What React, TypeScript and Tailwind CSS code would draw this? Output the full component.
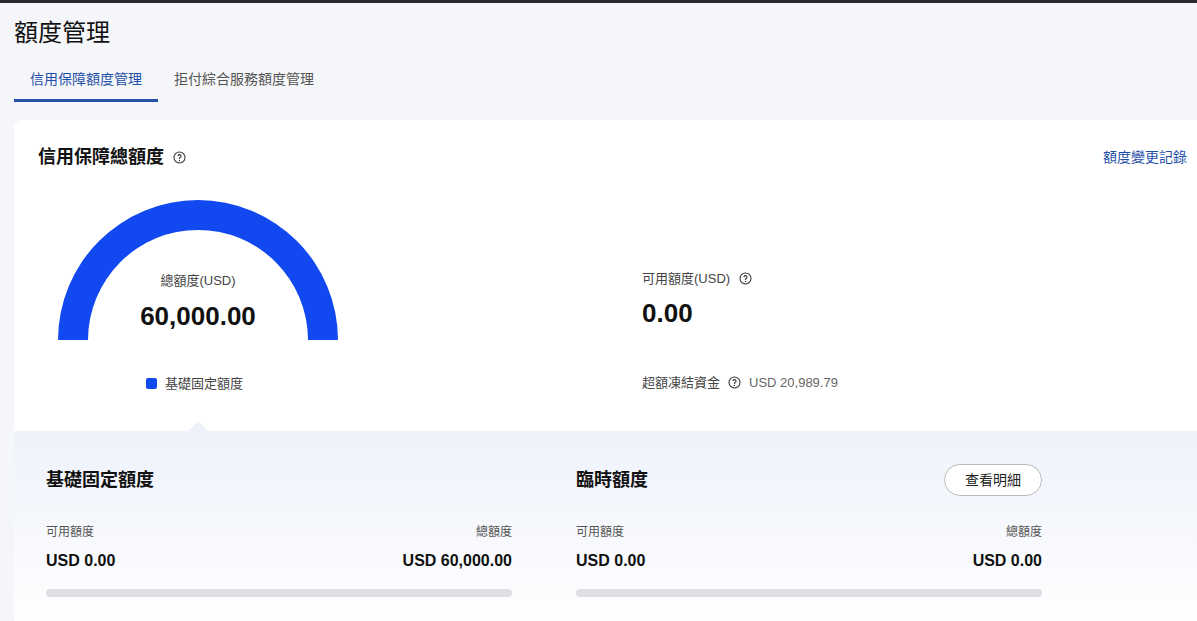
export default function App() {
  const f = { fontFamily: '"Liberation Sans", "Noto Sans CJK TC", sans-serif' };
  const Help = () => (
    <svg width="13" height="13" viewBox="0 0 16 16" className="inline-block">
      <circle cx="8" cy="8" r="6.8" fill="none" stroke="#333" strokeWidth="1.3" />
      <path d="M6.1 6.3a1.9 1.9 0 1 1 2.6 1.8c-.5.2-.7.6-.7 1.1v.5" fill="none" stroke="#333" strokeWidth="1.3" />
      <circle cx="8" cy="11.6" r=".8" fill="#333" />
    </svg>
  );
  const Col = ({ title, total, btn }: { title: string; total: string; btn?: boolean }) => (
    <div className="w-[466px]">
      <div className="flex items-center justify-between h-[34px]">
        <div className="text-[18px] font-bold text-[#111]">{title}</div>
        {btn && <button className="h-[32px] px-5 rounded-full border border-[#bbb] bg-white text-[14px] text-[#222]">查看明細</button>}
      </div>
      <div className="mt-[26px] flex justify-between text-[12px] text-[#555]"><span>可用額度</span><span>總額度</span></div>
      <div className="mt-[8px] flex justify-between text-[16px] font-bold text-[#111]"><span>USD 0.00</span><span>{total}</span></div>
      <div className="mt-[16px] h-[8px] rounded-full bg-[#dedfe2]" />
    </div>
  );
  return (
    <div style={f} className="w-[1197px] h-[621px] bg-[#f5f6f9] overflow-hidden">
      <div className="h-[3px] bg-[#2a2a2a]" />
      <div className="pl-[14px]">
        <div className="pt-[14px] text-[24px] text-[#111] leading-[32px]">額度管理</div>
        <div className="mt-[20px] flex text-[14px] h-[33px]">
          <div className="w-[144px] text-center text-[#1f4fa8] border-b-[3px] border-[#2750a8]">信用保障額度管理</div>
          <div className="ml-[16px] text-[#555]">拒付綜合服務額度管理</div>
        </div>
        <div className="mt-[18px] bg-white rounded-tl-[8px] h-[520px]">
          <div className="flex justify-between items-center pt-[24px] pl-[24px] pr-[10px]">
            <div className="flex items-center gap-[9px] text-[18px] font-bold text-[#111]">信用保障總額度 <Help /></div>
            <div className="text-[14px] text-[#1f4fa8]">額度變更記錄</div>
          </div>
          <div className="flex h-[260px]">
            <div className="w-[368px] relative">
              <svg width="282" height="142" viewBox="0 0 282 142" className="absolute left-[43px] top-[28px]">
                <path d="M1 141 A140 140 0 0 1 281 141 L251 141 A110 110 0 0 0 31 141 Z" fill="#1148f0" />
              </svg>
              <div className="absolute left-[43px] w-[282px] top-[100px] text-center">
                <div className="text-[13px] text-[#444]">總額度(USD)</div>
                <div className="mt-[6px] text-[26px] font-bold text-[#111]">60,000.00</div>
              </div>
              <div className="absolute left-[132px] top-[203px] flex items-center gap-[8px] text-[13px] text-[#444]">
                <span className="w-[11px] h-[11px] rounded-[2px] bg-[#1148f0]" />基礎固定額度
              </div>
            </div>
            <div className="ml-[260px] pt-[98px]">
              <div className="flex items-center gap-[9px] text-[13px] text-[#444]">可用額度(USD) <Help /></div>
              <div className="mt-[5px] text-[26px] font-bold text-[#111]">0.00</div>
              <div className="mt-[40px] flex items-center gap-[8px] text-[13px] text-[#444]">超額凍結資金 <Help /> <span className="text-[#666]">USD 20,989.79</span></div>
            </div>
          </div>
          <div className="relative bg-gradient-to-b from-[#eef2fb] to-white h-[200px] pt-[32px] pl-[32px] flex gap-[64px]">
            <div className="absolute left-[174px] -top-[10px] w-0 h-0 border-l-[10px] border-r-[10px] border-b-[10px] border-l-transparent border-r-transparent border-b-[#eef2fb]" />
            <Col title="基礎固定額度" total="USD 60,000.00" />
            <Col title="臨時額度" total="USD 0.00" btn />
          </div>
        </div>
      </div>
    </div>
  );
}
